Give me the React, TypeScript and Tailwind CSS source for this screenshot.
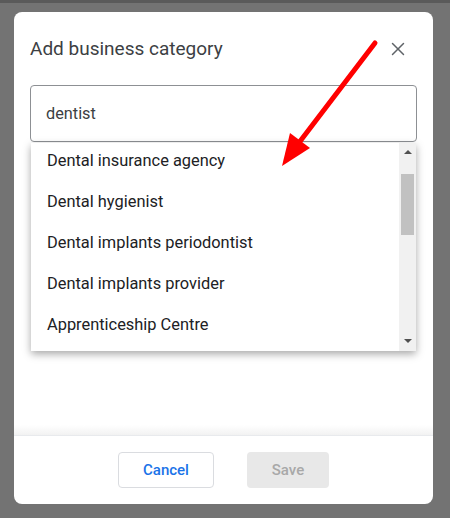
import { X } from 'lucide-react';

const options = [
  'Dental insurance agency',
  'Dental hygienist',
  'Dental implants periodontist',
  'Dental implants provider',
  'Apprenticeship Centre',
];

const App = () => {
  return (
    <div className="relative h-[518px] w-[450px] overflow-hidden bg-[#737373] font-['Roboto',sans-serif]">
      {/* page behind the overlay */}
      <div className="h-[3px] bg-[#5a5a5a]" />

      {/* Dialog */}
      <div className="relative ml-[14px] mt-[9px] flex h-[492px] w-[419px] flex-col rounded-lg bg-white">
        <div className="flex items-center justify-between pl-4 pr-[24px] pt-[25px]">
          <h2 className="text-[19px] leading-6 text-[#3c4043]">Add business category</h2>
          <X className="h-[22px] w-[22px] text-[#5f6368]" strokeWidth={1.6} />
        </div>

        <div className="mx-4 mt-[24px] flex h-[57px] items-center rounded border border-[#8d9094] px-[15px] pt-[2px] text-[16.3px] text-[#3c4043]">
          dentist
        </div>

        <div className="flex-1" />

        <div className="h-[10px] bg-gradient-to-b from-white to-[#f2f2f2]" />
        <div className="flex h-[69px] items-start justify-center gap-[33px] border-t border-[#e8eaed] pt-[16px]">
          <button className="h-[36px] w-[96px] rounded border border-[#dadce0] text-[15px] font-medium text-[#1a73e8]">
            Cancel
          </button>
          <button className="h-[36px] w-[82px] rounded bg-[#e8e8e8] text-[15px] font-medium text-[#a8a8a8]">
            Save
          </button>
        </div>

        {/* Autocomplete dropdown */}
        <div className="absolute left-[17px] top-[131px] flex h-[208px] w-[385px] overflow-hidden bg-white shadow-[0_3px_8px_rgba(0,0,0,0.35)]">
          <ul className="-mt-[2px] flex-1">
            {options.map((o) => (
              <li key={o} className="flex h-[41px] items-center pl-4 text-[16.4px] text-[#202124]">
                {o}
              </li>
            ))}
          </ul>
          <div className="flex w-[17px] flex-col items-center bg-[#f1f1f1]">
            <div className="mt-[7px] h-0 w-0 border-x-[4px] border-b-[4px] border-x-transparent border-b-[#505050]" />
            <div className="mt-[20px] h-[61px] w-[13px] bg-[#c1c1c1]" />
            <div className="flex-1" />
            <div className="mb-[8px] h-0 w-0 border-x-[4px] border-t-[4px] border-x-transparent border-t-[#505050]" />
          </div>
        </div>
      </div>

      {/* Red annotation arrow */}
      <svg className="pointer-events-none absolute inset-0" width="450" height="518" viewBox="0 0 450 518">
        <line x1="375" y1="43" x2="298" y2="144" stroke="#ff0000" strokeWidth="5" strokeLinecap="round" />
        <polygon points="282,166 310,148 290,133" fill="#ff0000" />
      </svg>
    </div>
  );
};

export default App;
